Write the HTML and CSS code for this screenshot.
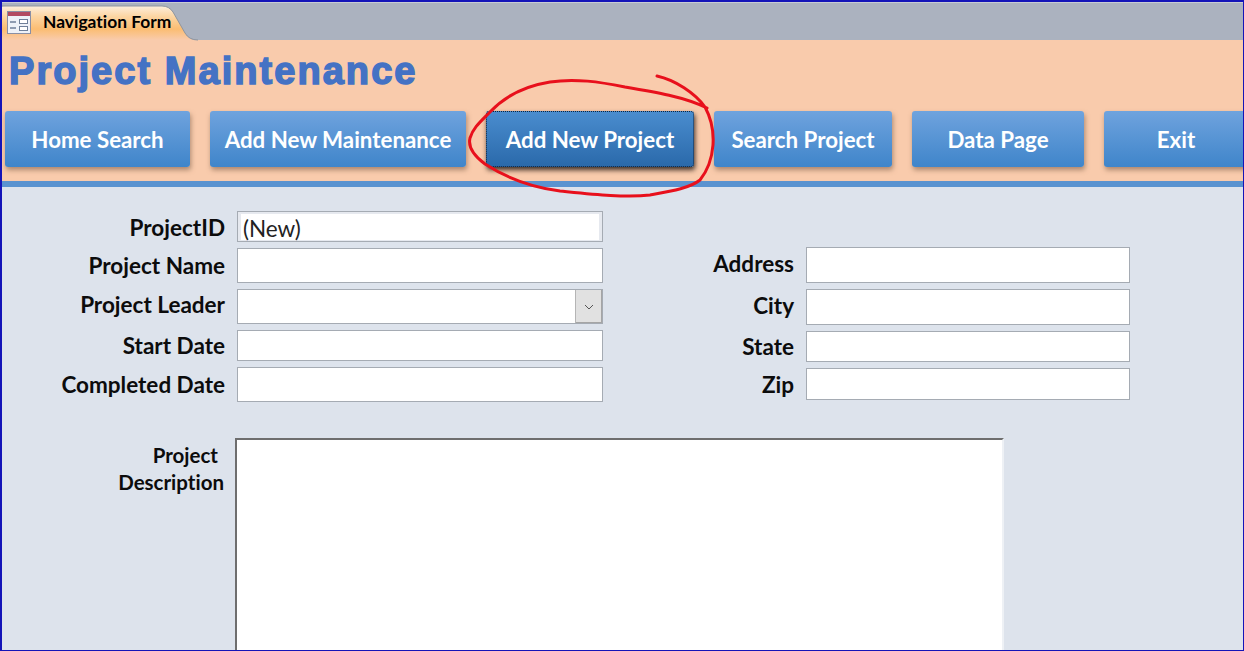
FILE: index.html
```html
<!DOCTYPE html>
<html lang="en">
<head>
    <meta charset="UTF-8">
    <title>Navigation Form</title>
    <link rel="stylesheet" href="styles.css">
</head>
<body>
    <div class="window">
        <!-- tab strip -->
        <div class="tab-bar">
            <div class="tab">
                <svg class="tab-shape" width="196" height="36" viewBox="0 0 196 36">
                    <defs>
                        <linearGradient id="tabFill" x1="0" y1="0" x2="0" y2="1">
                            <stop offset="0" stop-color="#fdeedd"/>
                            <stop offset="0.3" stop-color="#fcd6a4"/>
                            <stop offset="0.68" stop-color="#fbbd72"/>
                            <stop offset="1" stop-color="#f9cbac"/>
                        </linearGradient>
                    </defs>
                    <path d="M0 2 Q0 1 4 1 L160 1 Q167 1 171 7 L183 28 Q187 35 193 35 L0 35 Z" fill="url(#tabFill)"/>
                    <path d="M0 1 L160 1 Q167 1 171 7 L183 28 Q187 35 196 35" fill="none" stroke="#8f959e"/>
                </svg>
                <svg class="tab-icon" width="24" height="23" viewBox="0 0 24 23">
                    <rect x="0.5" y="0.5" width="23" height="22" fill="#eef1f8" stroke="#8a8fa5"/>
                    <rect x="1" y="1" width="22" height="4" fill="#b24a62"/>
                    <path d="M3 11 H9 M3 17 H9" stroke="#6f7f99" stroke-width="1.5"/>
                    <rect x="12.5" y="8.5" width="8" height="4" fill="#fff" stroke="#6f7f99"/>
                    <rect x="12.5" y="15.5" width="8" height="4" fill="#fff" stroke="#6f7f99"/>
                </svg>
                <span class="tab-label">Navigation Form</span>
            </div>
        </div>

        <!-- header + nav buttons -->
        <div class="header">
            <h1>Project Maintenance</h1>
            <div class="nav">
                <div class="nav-btn btn-home">Home Search</div>
                <div class="nav-btn btn-maint">Add New Maintenance</div>
                <div class="nav-btn btn-project active">Add New Project</div>
                <div class="nav-btn btn-search">Search Project</div>
                <div class="nav-btn btn-data">Data Page</div>
                <div class="nav-btn btn-exit">Exit</div>
            </div>
        </div>

        <!-- form -->
        <div class="content">
            <div class="form-top">
                <div class="col-left">
                    <div class="field short">
                        <label class="lower">ProjectID</label>
                        <div class="input readonly"><span>(New)</span></div>
                    </div>
                    <div class="field">
                        <label>Project Name</label>
                        <div class="input"></div>
                    </div>
                    <div class="field">
                        <label class="raise">Project Leader</label>
                        <div class="input combo">
                            <div class="combo-btn">
                                <svg width="10" height="6" viewBox="0 0 10 6"><path d="M1 1 L5 5 L9 1" fill="none" stroke="#555"/></svg>
                            </div>
                        </div>
                    </div>
                    <div class="field short">
                        <label>Start Date</label>
                        <div class="input"></div>
                    </div>
                    <div class="field">
                        <label>Completed Date</label>
                        <div class="input"></div>
                    </div>
                </div>
                <div class="col-right">
                    <div class="field tall">
                        <label class="raise">Address</label>
                        <div class="input"></div>
                    </div>
                    <div class="field tall">
                        <label class="raise">City</label>
                        <div class="input"></div>
                    </div>
                    <div class="field short">
                        <label>State</label>
                        <div class="input"></div>
                    </div>
                    <div class="field zip">
                        <label>Zip</label>
                        <div class="input"></div>
                    </div>
                </div>
            </div>
            <div class="desc-row">
                <div class="desc-label"><span class="desc-first">Project</span><br>Description</div>
                <div class="desc-box"></div>
            </div>
        </div>

        <!-- hand drawn circle round the active button -->
        <svg class="scribble" width="1244" height="651" viewBox="0 0 1244 651">
            <path d="M657 76 C675 80 695 93 705 107 C711 118 714 130 713 145 C712 158 708 170 700 180 C690 188 672 191 650 195 C625 198 590 194 560 191 C530 187 505 177 485 164 C473 155 468 146 470 138 C473 128 480 122 490 112 C505 96 525 86 550 82 C575 78 600 82 625 87 C655 92 685 97 707 108" fill="none" stroke="#e8101c" stroke-width="3" stroke-linecap="round"/>
        </svg>
    </div>
</body>
</html>
```

FILE: styles.css
```css
html, body {
    margin: 0;
    height: 100%;
    overflow: hidden;
}
body {
    font-family: 'Lato', 'Liberation Sans', sans-serif;
    font-variant-ligatures: none;
    color: #0c0c0c;
    background-color: #dde3ec;
}
.window {
    position: relative;
    height: 651px;
    box-sizing: border-box;
    border: 1px solid #1414b8;
    border-left-width: 2px;
    border-top-width: 2px;
    overflow: hidden;
    display: flex;
    flex-direction: column;
}
.tab-bar {
    height: 38px;
    flex-shrink: 0;
    box-sizing: border-box;
    padding-top: 2px;
    background-color: #abb2bf;
    border-top: 1px solid #c9ccd4;
    display: flex;
}
.tab {
    position: relative;
    width: 196px;
    height: 36px;
    display: flex;
    align-items: center;
}
.tab-shape {
    position: absolute;
    top: 0;
    left: 0;
}
.tab-icon {
    position: relative;
    margin-left: 5px;
    margin-bottom: 1px;
}
.tab-label {
    position: relative;
    margin-left: 12px;
    margin-bottom: 3px;
    font-size: 17.4px;
    font-weight: bold;
    color: #000;
}
.header {
    height: 141px;
    flex-shrink: 0;
    background-color: #f9cbac;
    border-bottom: 6px solid #5a93d0;
    box-sizing: content-box;
}
h1 {
    margin: 0;
    padding: 9px 0 0 7px;
    height: 62px;
    box-sizing: border-box;
    font-family: 'Liberation Sans', Arial, sans-serif;
    font-size: 38px;
    line-height: 44px;
    font-weight: bold;
    letter-spacing: 2.05px;
    color: #4472c4;
    -webkit-text-stroke: 1.5px #4472c4;
}
.nav {
    display: flex;
    gap: 20px;
    margin-top: 9px;
    padding-left: 3px;
}
.nav-btn {
    height: 56px;
    flex-shrink: 0;
    display: flex;
    align-items: center;
    justify-content: center;
    box-sizing: border-box;
    border-radius: 3px;
    font-size: 22.3px;
    font-weight: bold;
    color: #fff;
    background: linear-gradient(#6fa3de, #3f85ca);
    box-shadow: 1px 3px 5px rgba(110, 80, 60, 0.55);
}
.btn-home { width: 185px; }
.btn-maint { width: 256px; }
.btn-project { width: 208px; }
.btn-search { width: 178px; }
.btn-data { width: 172px; }
.btn-exit { width: 144px; }
.nav-btn.active {
    background: linear-gradient(#4a8dcf, #2a69aa);
    outline: 1px dotted #10233a;
    outline-offset: -1px;
    box-shadow: 1px 3px 5px rgba(30, 20, 15, 0.85);
}
.content {
    flex: 1;
    background-color: #dde3ec;
}
.form-top {
    display: flex;
    padding-top: 24px;
}
.col-left {
    width: 601px;
    flex-shrink: 0;
    display: flex;
    flex-direction: column;
    gap: 6px;
}
.col-right {
    width: 527px;
    flex-shrink: 0;
    margin-top: 36px;
    display: flex;
    flex-direction: column;
    gap: 6px;
}
.field {
    height: 35px;
    display: flex;
    align-items: center;
    gap: 12px;
}
.field.tall {
    height: 36px;
}
.field.short {
    height: 31px;
}
.field.zip {
    height: 32px;
}
.field label {
    flex: 1;
    text-align: right;
    font-size: 22.5px;
    font-weight: bold;
}
.field label.raise {
    padding-bottom: 4px;
}
.field label.lower {
    padding-top: 2px;
}
.input {
    height: 100%;
    box-sizing: border-box;
    background-color: #fff;
    border: 1px solid #a5abb3;
    flex-shrink: 0;
}
.col-left .input {
    width: 366px;
}
.col-right .input {
    width: 324px;
}
.input.readonly {
    box-shadow: inset 3px 2px 0 #e6e9ef, inset -3px -1px 0 #e6e9ef;
    display: flex;
    align-items: flex-end;
    padding-left: 5px;
    font-size: 22.5px;
    line-height: 25px;
    color: #222;
}
.input.combo {
    display: flex;
    justify-content: flex-end;
}
.combo-btn {
    width: 26px;
    background-color: #e1e1e1;
    border-left: 1px solid #b5b5b5;
    box-shadow: inset -1px -1px 0 #a5a5a5;
    display: flex;
    align-items: center;
    justify-content: center;
}
.desc-row {
    display: flex;
    margin-top: 36px;
}
.desc-label {
    width: 222px;
    flex-shrink: 0;
    text-align: right;
    font-size: 20.5px;
    font-weight: bold;
    line-height: 27px;
    padding-top: 4px;
}
.desc-first {
    margin-right: 6px;
}
.desc-box {
    margin-left: 11px;
    width: 769px;
    height: 230px;
    box-sizing: border-box;
    background-color: #fff;
    border-top: 2px solid #6e6e6e;
    border-left: 2px solid #6e6e6e;
    border-right: 2px solid #eef1f5;
}
.scribble {
    position: absolute;
    top: -2px;
    left: -2px;
    pointer-events: none;
}
```
